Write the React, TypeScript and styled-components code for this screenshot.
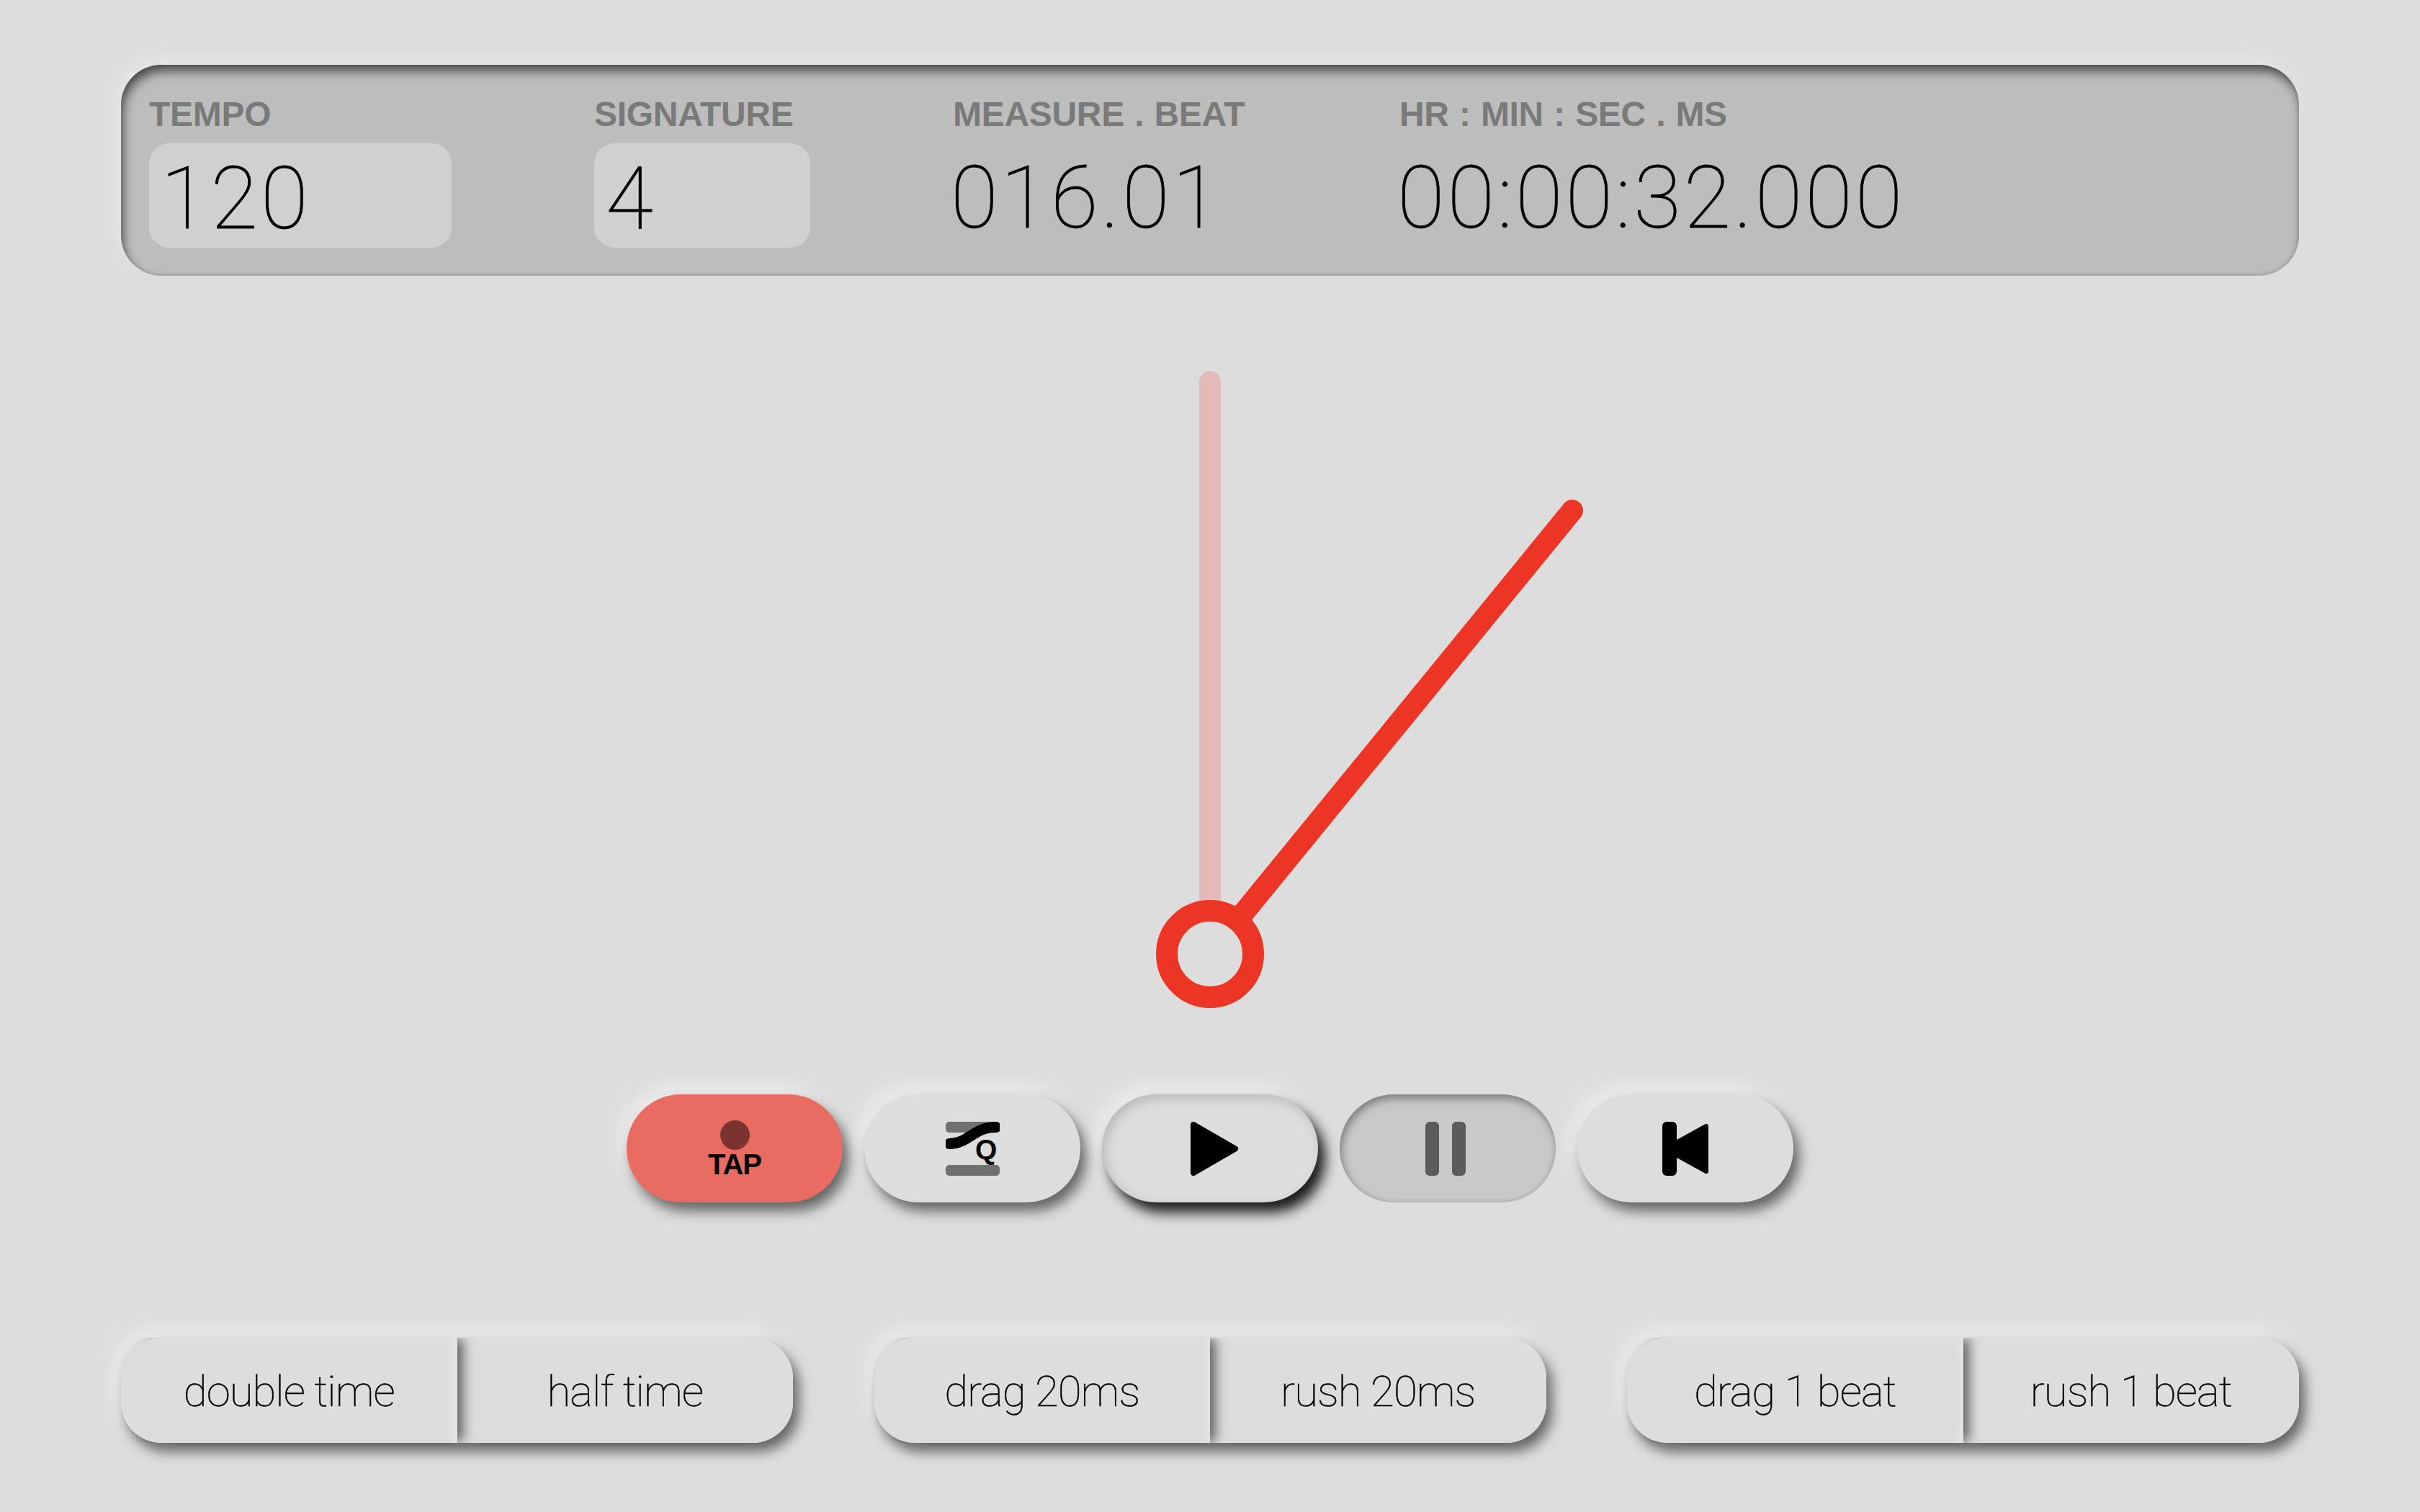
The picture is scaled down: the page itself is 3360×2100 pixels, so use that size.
import { createGlobalStyle, styled } from "styled-components";

const GlobalStyle = createGlobalStyle`
  html, body {
    margin: 0;
    padding: 0;
    background: #dddddd;
  }
`;

const VALUE_FONT = `"Roboto", "Liberation Sans", sans-serif`;
const LABEL_FONT = `"Liberation Sans", Arial, sans-serif`;

const Page = styled.div`
  width: 3360px;
  height: 2100px;
  box-sizing: border-box;
  padding: 90px 168px 0 168px;
  display: flex;
  flex-direction: column;
  background: #dddddd;
  overflow: hidden;
`;

const Panel = styled.div`
  height: 293px;
  box-sizing: border-box;
  padding: 45px 39px 0;
  border-radius: 56px;
  background: #bdbdbd;
  display: grid;
  grid-template-columns: 420px 300px 422px auto;
  column-gap: 198px;
  justify-content: start;
  box-shadow:
    inset 4px 10px 16px -2px rgba(0, 0, 0, 0.66),
    inset -2px -2px 5px rgba(0, 0, 0, 0.1),
    -8px -10px 22px rgba(255, 255, 255, 0.25);
`;

const Field = styled.div`
  display: flex;
  flex-direction: column;
`;

const Label = styled.div`
  font: bold 48px/48px ${LABEL_FONT};
  letter-spacing: -0.3px;
  word-spacing: 1.2px;
  color: #7a7a7a;
  height: 64px;
  white-space: nowrap;
`;

const ValueInput = styled.input`
  width: 100%;
  height: 145px;
  box-sizing: border-box;
  padding: 8px 0 0 16px;
  border: none;
  outline: none;
  border-radius: 28px;
  background: #d0d0d0;
  color: #000;
  font: 100 120px/137px ${VALUE_FONT};
  letter-spacing: 3.8px;
  -webkit-text-stroke: 0.8px #000;
`;

const ValueText = styled.div`
  height: 145px;
  margin-left: -3px;
  padding-top: 8px;
  box-sizing: border-box;
  color: #000;
  font: 100 120px/137px ${VALUE_FONT};
  letter-spacing: 3.8px;
  -webkit-text-stroke: 0.8px #000;
  white-space: nowrap;
`;

const Dial = styled.svg`
  display: block;
  width: 1100px;
  height: 900px;
  margin: 127px auto 0;
`;

const TransportRow = styled.div`
  display: flex;
  justify-content: center;
  gap: 30px;
  margin-top: 110px;
`;

const shadows = {
  raised: `8px 12px 18px rgba(0, 0, 0, 0.55), -10px -12px 26px rgba(255, 255, 255, 0.42)`,
  active: `inset 5px 6px 16px rgba(0, 0, 0, 0.16), 10px 14px 18px rgba(0, 0, 0, 0.88), -10px -12px 26px rgba(255, 255, 255, 0.42)`,
  pressed: `inset 3px 6px 12px rgba(0, 0, 0, 0.36), inset -2px -2px 5px rgba(0, 0, 0, 0.06)`,
};

const TransportButton = styled.button<{ $tone?: string; $state: "raised" | "active" | "pressed" }>`
  width: 300px;
  height: 150px;
  padding: 0;
  border: none;
  border-radius: 75px;
  display: flex;
  flex-direction: column;
  align-items: center;
  justify-content: center;
  background: ${(p) => p.$tone || "#dddddd"};
  box-shadow: ${(p) => shadows[p.$state]};
`;

const TapDot = styled.span`
  width: 41px;
  height: 41px;
  border-radius: 50%;
  background: #7a332e;
`;

const TapLabel = styled.span`
  margin-top: 2px;
  font: bold 40px/36px ${LABEL_FONT};
  letter-spacing: -1px;
  color: #000;
`;

const SegmentRow = styled.div`
  display: flex;
  justify-content: space-between;
  margin-top: 188px;
`;

const SegmentGroup = styled.div`
  display: flex;
  width: 933px;
  height: 146px;
  border-radius: 56px;
  box-shadow: 8px 12px 18px rgba(0, 0, 0, 0.55), -10px -12px 26px rgba(255, 255, 255, 0.42);
`;

const Segment = styled.button<{ $first?: boolean }>`
  flex: 1;
  position: relative;
  z-index: ${(p) => (p.$first ? 1 : 0)};
  padding: 4px 0 0;
  border: none;
  border-radius: ${(p) => (p.$first ? "56px 0 0 56px" : "0 56px 56px 0")};
  background: #dddddd;
  color: #000;
  font: 100 60px/142px ${VALUE_FONT};
  letter-spacing: -1px;
  -webkit-text-stroke: 0.5px #000;
  box-shadow: ${(p) =>
    p.$first ? "inset -14px 0 12px -10px rgba(255,255,255,0.3), 10px 0 16px -2px rgba(0, 0, 0, 0.55)" : "none"};
  clip-path: ${(p) => (p.$first ? "inset(0 -36px 0 0)" : "none")};
`;

function QuantizeIcon() {
  return (
    <svg width="75" height="75" viewBox="0 0 75 75">
      <rect x="0" y="0" width="75" height="15" rx="5" fill="#707070" />
      <rect x="0" y="60" width="75" height="15" rx="5" fill="#707070" />
      <path
        d="M5 30.5 C32 30.5 38 7.5 70 7.5"
        fill="none"
        stroke="#000"
        strokeWidth="15"
        strokeLinecap="round"
      />
      <text x="41" y="52" fontFamily="Liberation Sans, Arial, sans-serif" fontWeight="700" fontSize="39" fill="#000">
        Q
      </text>
    </svg>
  );
}

function PlayIcon() {
  return (
    <svg width="66" height="75" viewBox="0 0 66 75" style={{ marginLeft: 12 }}>
      <polygon points="4,4 62,37.5 4,71" fill="#000" stroke="#000" strokeWidth="8" strokeLinejoin="round" />
    </svg>
  );
}

function PauseIcon() {
  return (
    <svg width="56" height="75" viewBox="0 0 56 75" style={{ marginRight: 6 }}>
      <rect x="0" y="0" width="19" height="75" rx="6" fill="#5a5a5a" />
      <rect x="37" y="0" width="19" height="75" rx="6" fill="#5a5a5a" />
    </svg>
  );
}

function SkipBackIcon() {
  return (
    <svg width="64" height="75" viewBox="0 0 64 75">
      <rect x="0" y="0" width="20" height="75" rx="6" fill="#000" />
      <polygon points="61,6 61,69 4,37.5" fill="#000" stroke="#000" strokeWidth="6" strokeLinejoin="round" />
    </svg>
  );
}

const segments = [
  ["double time", "half time"],
  ["drag 20ms", "rush 20ms"],
  ["drag 1 beat", "rush 1 beat"],
];

export default function App() {
  return (
    <Page>
      <GlobalStyle />
      <Panel>
        <Field>
          <Label>TEMPO</Label>
          <ValueInput readOnly value="120" />
        </Field>
        <Field>
          <Label>SIGNATURE</Label>
          <ValueInput readOnly value="4" />
        </Field>
        <Field>
          <Label>MEASURE . BEAT</Label>
          <ValueText>016.01</ValueText>
        </Field>
        <Field>
          <Label>HR : MIN : SEC . MS</Label>
          <ValueText>00:00:32.000</ValueText>
        </Field>
      </Panel>

      <Dial viewBox="0 0 1100 900">
        <line x1="550" y1="815" x2="550" y2="20" stroke="#e2bab7" strokeWidth="30" strokeLinecap="round" />
        <line x1="550" y1="815" x2="1053" y2="199" stroke="#ec3524" strokeWidth="30" strokeLinecap="round" />
        <circle cx="550" cy="815" r="60" fill="#dddddd" stroke="#ec3524" strokeWidth="30" />
      </Dial>

      <TransportRow>
        <TransportButton $state="raised" $tone="#e86c61">
          <TapDot />
          <TapLabel>TAP</TapLabel>
        </TransportButton>
        <TransportButton $state="raised">
          <QuantizeIcon />
        </TransportButton>
        <TransportButton $state="active">
          <PlayIcon />
        </TransportButton>
        <TransportButton $state="pressed" $tone="#c8c8c8">
          <PauseIcon />
        </TransportButton>
        <TransportButton $state="raised">
          <SkipBackIcon />
        </TransportButton>
      </TransportRow>

      <SegmentRow>
        {segments.map(([a, b]) => (
          <SegmentGroup key={a}>
            <Segment $first>{a}</Segment>
            <Segment>{b}</Segment>
          </SegmentGroup>
        ))}
      </SegmentRow>
    </Page>
  );
}
